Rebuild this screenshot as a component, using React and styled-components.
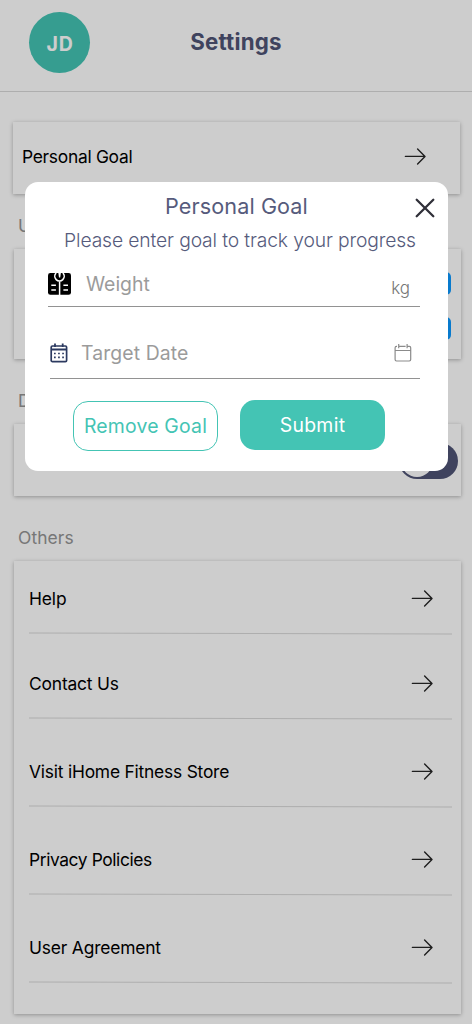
import React from "react";
import styled, { createGlobalStyle } from "styled-components";

const GlobalStyle = createGlobalStyle`
  * { box-sizing: border-box; }
  body {
    margin: 0;
    background: #fff;
    font-family: "Inter", "Liberation Sans", sans-serif;
    overflow: hidden;
  }
  button { font-family: inherit; }
`;

const Screen = styled.div`
  position: relative;
  width: 472px;
  height: 1024px;
  overflow: hidden;
  background: #fff;
`;

const Header = styled.header`
  display: grid;
  grid-template-columns: 1fr auto 1fr;
  align-items: center;
  height: 92px;
  padding: 0 29px 6px;
  border-bottom: 1px solid #d9d9d9;
`;

const Avatar = styled.div`
  display: flex;
  align-items: center;
  justify-content: center;
  width: 61px;
  height: 61px;
  border-radius: 50%;
  background: #44c4b4;
  color: #fff;
  font-size: 19.5px;
  font-weight: 700;
  letter-spacing: 0.8px;
  padding: 2px 0 0 1px;
`;

const PageTitle = styled.h1`
  margin: 0 0 1px;
  font-size: 22.3px;
  font-weight: 700;
  line-height: 30px;
  letter-spacing: 0.2px;
  color: #4f5475;
`;

const Content = styled.main`
  display: flex;
  flex-direction: column;
  padding: 30px 11px 0 14px;
`;

const Card = styled.section`
  height: ${(p) => p.$height}px;
  background: #fff;
  box-shadow: 0 1px 4px rgba(0, 0, 0, 0.3);
`;

const GoalCard = styled(Card)`
  display: flex;
  align-items: center;
  justify-content: space-between;
  margin: 0 1px 0 -1px;
  padding: 0 34px 4px 9px;
`;

const UnitsCard = styled(Card)`
  display: flex;
  flex-direction: column;
  align-items: flex-end;
  gap: 22px;
  padding: 23px 10px 0;
`;

const UnitChip = styled.span`
  width: 52px;
  height: 23px;
  border-radius: 5px;
  background: #0a98ff;
`;

const ToggleCard = styled(Card)`
  display: flex;
  align-items: center;
  justify-content: flex-end;
  padding: 1px 3px 0 0;
`;

const Toggle = styled.span`
  display: flex;
  align-items: center;
  width: 59px;
  height: 36px;
  padding: 0 2px;
  border-radius: 18px;
  background: #4f5475;

  &::before {
    content: "";
    width: 32px;
    height: 32px;
    border-radius: 50%;
    background: #fff;
  }
`;

const SectionLabel = styled.h2`
  display: flex;
  align-items: center;
  height: ${(p) => p.$height}px;
  margin: 0;
  padding: ${(p) => p.$drop}px 0 0 4px;
  font-size: 17.4px;
  font-weight: 400;
  letter-spacing: 0.1px;
  color: #949494;
`;

const ListCard = styled(Card)`
  padding: 0 9px 0 15px;
`;

const ListRow = styled.div`
  display: flex;
  align-items: flex-end;
  justify-content: space-between;
  height: ${(p) => p.$height}px;
  padding: 0 19px 23px 0;
`;

const Divider = styled.hr`
  height: 1px;
  margin: 0;
  border: 0;
  background: #d9d9d9;
  transform: rotate(0.14deg);
`;

const RowLabel = styled.span`
  padding-top: 2px;
  font-size: 17.4px;
  line-height: 22px;
  font-weight: 400;
  letter-spacing: ${(p) => p.$tracking || 0}px;
  color: #000;
  white-space: nowrap;
`;

const ArrowSvg = styled.svg`
  display: block;
  width: 22px;
  height: 24px;
`;

const Overlay = styled.div`
  position: absolute;
  inset: 0;
  background: rgba(0, 0, 0, 0.196);
`;

const Modal = styled.div`
  position: absolute;
  top: 182px;
  left: 25px;
  width: 423px;
  height: 289px;
  border-radius: 13px;
  background: #fff;
`;

const ModalTitle = styled.h2`
  margin: 0;
  padding-top: 8px;
  font-size: 21.6px;
  font-weight: 400;
  line-height: 32px;
  letter-spacing: 0.1px;
  text-align: center;
  color: #565b7c;
`;

const ModalText = styled.p`
  margin: 2px 0 0;
  padding-left: 7px;
  font-size: 19.3px;
  line-height: 32px;
  font-weight: 300;
  letter-spacing: -0.13px;
  text-align: center;
  white-space: nowrap;
  color: #565b7c;
`;

const CloseButton = styled.button`
  position: absolute;
  top: 16px;
  right: 13px;
  width: 20px;
  height: 20px;
  padding: 0;
  border: 0;
  background: none;

  svg { display: block; }
`;

const Field = styled.div`
  display: flex;
  align-items: center;
  height: ${(p) => p.$height}px;
  margin: 0 28px 0 ${(p) => p.$indent}px;
  padding: ${(p) => p.$drop}px ${(p) => p.$end}px 0 0;
  border-bottom: 1px solid #929292;

  svg { display: block; flex: none; }
`;

const Placeholder = styled.span`
  flex: 1;
  padding-left: ${(p) => p.$gap}px;
  font-size: 19.4px;
  letter-spacing: ${(p) => p.$tracking || 0}px;
  color: #9b9b9b;
`;

const Unit = styled.span`
  padding-top: 8px;
  font-size: 17px;
  font-weight: 300;
  letter-spacing: -0.1px;
  color: #777;
`;

const Actions = styled.div`
  display: flex;
  gap: 22px;
  padding: 21px 0 0 48px;
`;

const ActionButton = styled.button`
  width: 145px;
  height: 50px;
  padding: 0;
  border: 0;
  border-radius: 15px;
  background: #44c4b4;
  color: #fff;
  font-size: 19.4px;
  letter-spacing: ${(p) => p.$tracking || 0}px;
  white-space: nowrap;
`;

const OutlineButton = styled(ActionButton)`
  margin-top: 1px;
  border: 1.5px solid #44c4b4;
  background: #fff;
  color: #44c4b4;
`;

function Arrow() {
  return (
    <ArrowSvg viewBox="0 0 22 24" fill="none" stroke="#262626" strokeWidth="1.4" strokeLinecap="round" strokeLinejoin="round">
      <path d="M1.4 12.4H21M13.6 4.9L21 12.4L13.6 19.9" />
    </ArrowSvg>
  );
}

function ScaleIcon() {
  return (
    <svg width="24" height="24" viewBox="0 0 24 24">
      <rect x="0" y="1" width="23" height="21.8" rx="2.4" fill="#000" />
      <path d="M8.1 1A4.7 4.7 0 1 0 14.9 1" fill="none" stroke="#fff" strokeWidth="1.6" />
      <path d="M10.3 .8H12.9L12.2 5.4H11Z" fill="#fff" />
      <path d="M11.6 9.4V23" stroke="#fff" strokeWidth="1.5" />
      <path d="M3.3 13.3H7.9M3.3 17.9H7.9M15.4 13.3H20M15.4 17.9H20" stroke="#fff" strokeWidth="1.5" />
    </svg>
  );
}

function CalendarIcon() {
  return (
    <svg width="18" height="20" viewBox="0 0 18 20" fill="none" stroke="#2c3a60">
      <rect x="1.2" y="3" width="15.4" height="15.6" rx="1.2" strokeWidth="1.7" />
      <path d="M1.2 6.5H16.6" strokeWidth="2" />
      <path d="M5 .5V4M12.7 .5V4" strokeWidth="1.8" />
      <path d="M4 10.5H5.7M8.1 10.5H9.8M12.2 10.5H13.9M4 14.4H5.7M8.1 14.4H9.8M12.2 14.4H13.9" strokeWidth="1.7" />
    </svg>
  );
}

function DateIcon() {
  return (
    <svg width="18" height="20" viewBox="0 0 18 20" fill="none" stroke="#8b8b8b" strokeWidth="1.2">
      <path d="M3 3.4H2.5Q1.1 3.4 1.1 4.8V16.6Q1.1 18 2.5 18H15.3Q16.7 18 16.7 16.6V4.8Q16.7 3.4 15.3 3.4M4.9 3.4H11.6M13.4 3.4H15.3M1.1 7.5H16.7M4.7 .9V5.3M13.1 .9V5.3" />
    </svg>
  );
}

const LINKS = [
  { label: "Help", height: 72, tracking: -0.1 },
  { label: "Contact Us", height: 84, tracking: -0.17 },
  { label: "Visit iHome Fitness Store", height: 87, tracking: -0.21 },
  { label: "Privacy Policies", height: 87, tracking: -0.4 },
  { label: "User Agreement", height: 87, tracking: -0.17 },
];

export default function App() {
  return (
    <Screen>
      <GlobalStyle />
      <Header>
        <Avatar>JD</Avatar>
        <PageTitle>Settings</PageTitle>
      </Header>
      <Content>
        <GoalCard $height={72}>
          <RowLabel $tracking={-0.28}>Personal Goal</RowLabel>
          <Arrow />
        </GoalCard>
        <SectionLabel $height={55} $drop={8}>Units</SectionLabel>
        <UnitsCard $height={110}>
          <UnitChip />
          <UnitChip />
        </UnitsCard>
        <SectionLabel $height={65} $drop={18}>Dark Mode</SectionLabel>
        <ToggleCard $height={72}>
          <Toggle />
        </ToggleCard>
        <SectionLabel $height={65} $drop={18}>Others</SectionLabel>
        <ListCard $height={453}>
          {LINKS.map((l) => (
            <React.Fragment key={l.label}>
              <ListRow $height={l.height}>
                <RowLabel $tracking={l.tracking}>{l.label}</RowLabel>
                <Arrow />
              </ListRow>
              <Divider />
            </React.Fragment>
          ))}
        </ListCard>
      </Content>
      <Overlay />
      <Modal>
        <ModalTitle>Personal Goal</ModalTitle>
        <ModalText>Please enter goal to track your progress</ModalText>
        <CloseButton aria-label="Close">
          <svg width="20" height="20" viewBox="0 0 20 20" stroke="#303039" strokeWidth="2.3" strokeLinecap="round">
            <path d="M1.7 1.7L18.3 18.3M18.3 1.7L1.7 18.3" />
          </svg>
        </CloseButton>
        <Field $height={51} $indent={23} $end={10} $drop={5}>
          <ScaleIcon />
          <Placeholder $gap={14}>Weight</Placeholder>
          <Unit>kg</Unit>
        </Field>
        <Field $height={72} $indent={25} $end={8} $drop={21}>
          <CalendarIcon />
          <Placeholder $gap={13} $tracking={0.1}>Target Date</Placeholder>
          <DateIcon />
        </Field>
        <Actions>
          <OutlineButton $tracking={0.2}>Remove Goal</OutlineButton>
          <ActionButton $tracking={0.3}>Submit</ActionButton>
        </Actions>
      </Modal>
    </Screen>
  );
}
